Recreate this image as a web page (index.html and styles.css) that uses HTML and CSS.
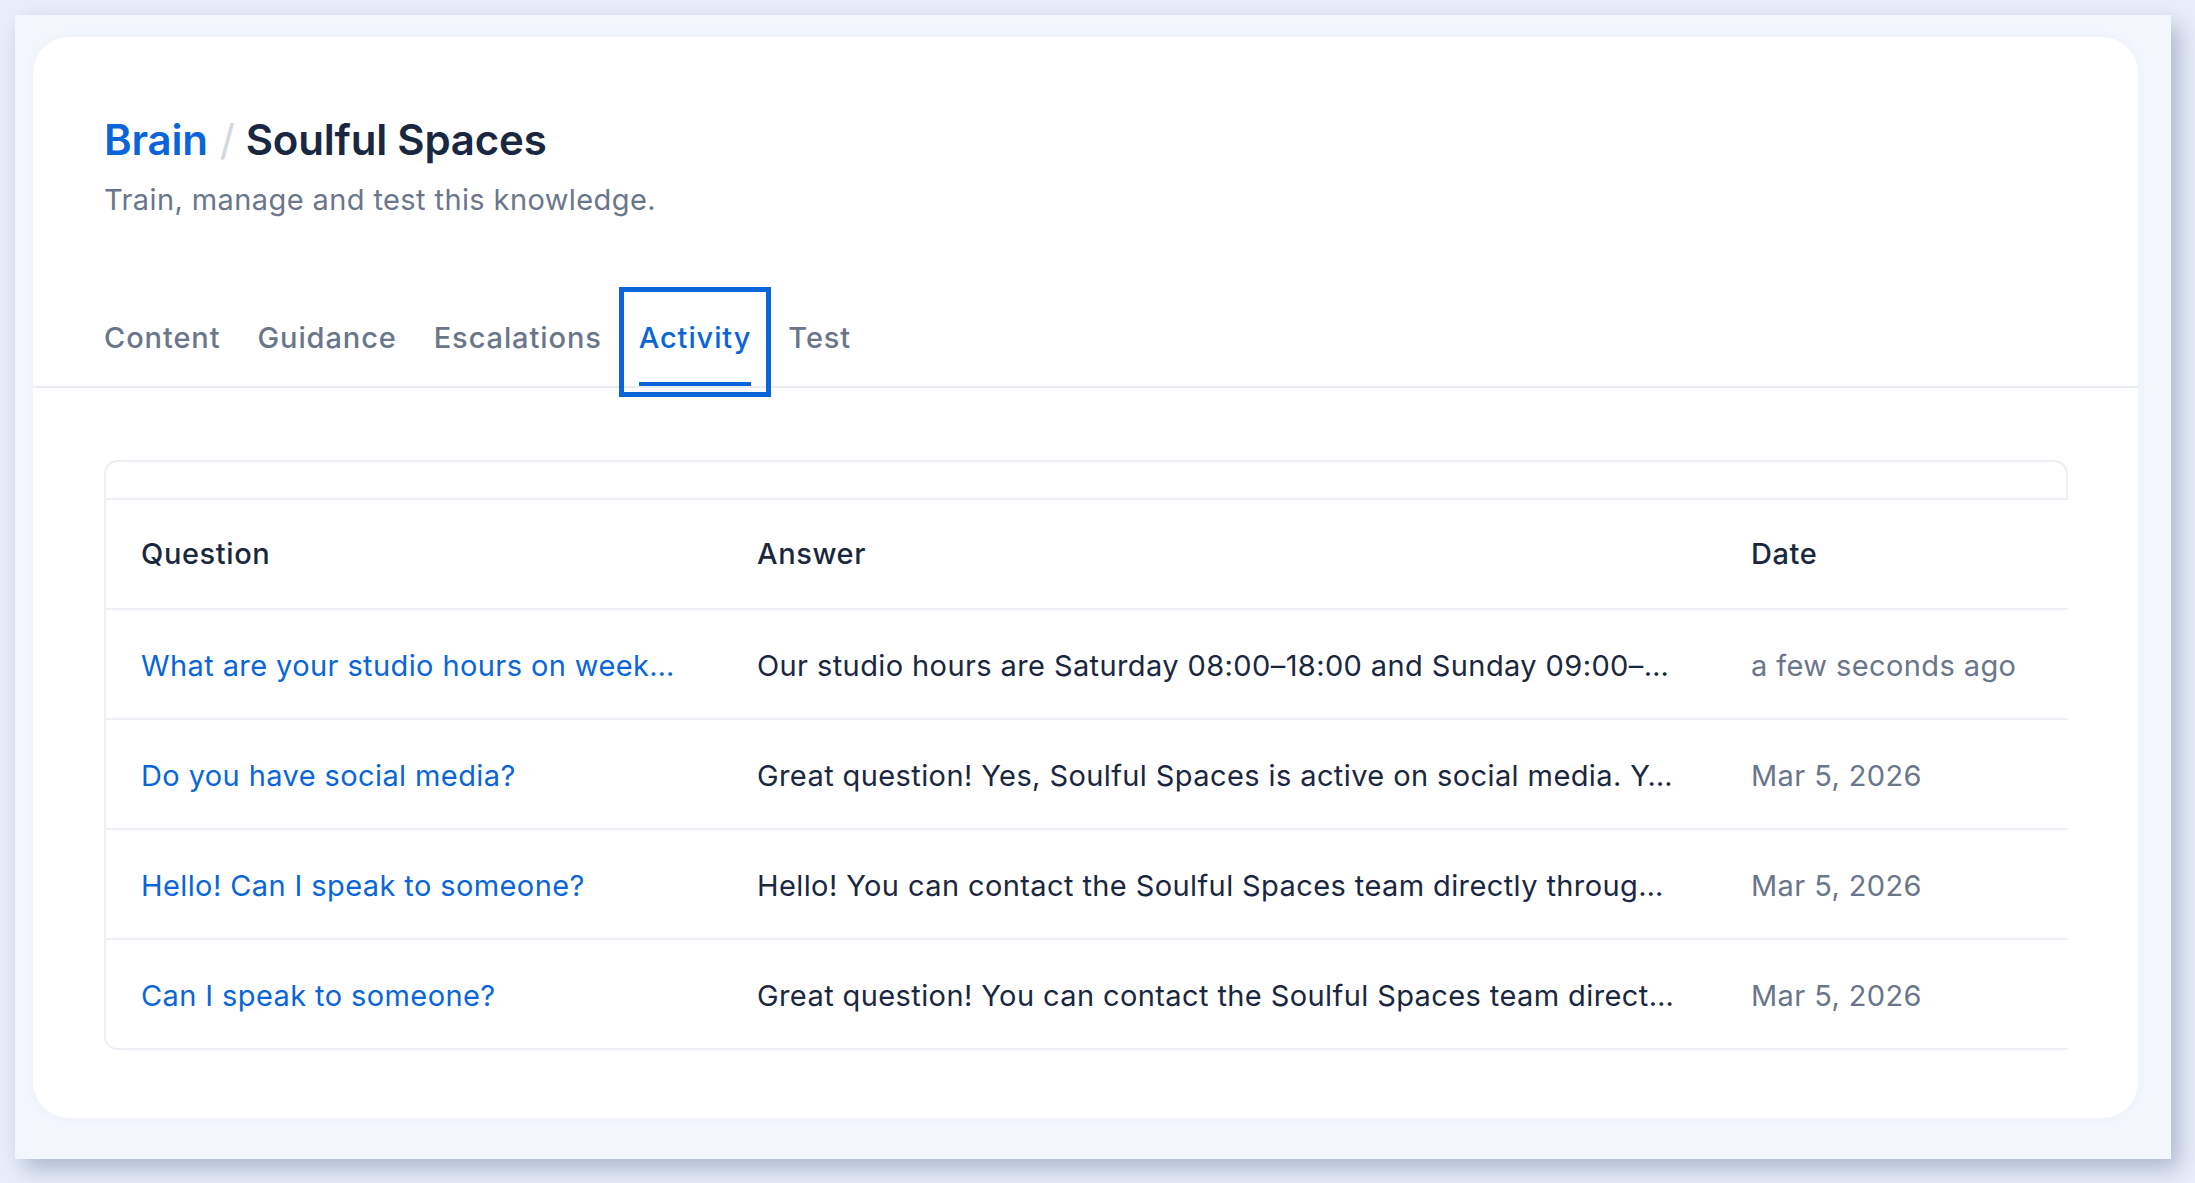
FILE: index.html
```html
<!DOCTYPE html>
<html lang="en">
<head>
<meta charset="utf-8">
<title>Brain / Soulful Spaces</title>
<link rel="stylesheet" href="styles.css">
</head>
<body>
<div class="frame">
  <main class="card">
    <header class="page-head">
      <h1 class="title"><span class="crumb">Brain</span><span class="sep">/</span><span class="current">Soulful Spaces</span></h1>
      <p class="subtitle">Train, manage and test this knowledge.</p>
    </header>
    <nav class="tabs">
      <button class="tab"><span class="tab-label">Content</span></button>
      <button class="tab"><span class="tab-label">Guidance</span></button>
      <button class="tab"><span class="tab-label">Escalations</span></button>
      <button class="tab active"><span class="tab-label">Activity</span></button>
      <button class="tab"><span class="tab-label">Test</span></button>
    </nav>
    <section class="content">
      <div class="table">
        <div class="table-band"></div>
        <div class="row head">
          <div class="cell">Question</div>
          <div class="cell">Answer</div>
          <div class="cell">Date</div>
        </div>
        <div class="row body-row">
          <div class="cell q">What are your studio hours on week…</div>
          <div class="cell a">Our studio hours are Saturday 08:00–18:00 and Sunday 09:00–…</div>
          <div class="cell d">a few seconds ago</div>
        </div>
        <div class="row body-row">
          <div class="cell q">Do you have social media?</div>
          <div class="cell a">Great question! Yes, Soulful Spaces is active on social media. Y…</div>
          <div class="cell d">Mar 5, 2026</div>
        </div>
        <div class="row body-row">
          <div class="cell q">Hello! Can I speak to someone?</div>
          <div class="cell a">Hello! You can contact the Soulful Spaces team directly throug…</div>
          <div class="cell d">Mar 5, 2026</div>
        </div>
        <div class="row body-row">
          <div class="cell q">Can I speak to someone?</div>
          <div class="cell a">Great question! You can contact the Soulful Spaces team direct…</div>
          <div class="cell d">Mar 5, 2026</div>
        </div>
      </div>
    </section>
  </main>
</div>
</body>
</html>
```
FILE: styles.css
```css
* { box-sizing: border-box; }

html, body {
  margin: 0;
  padding: 0;
}

body {
  background: #e9effa;
  font-family: Inter, "Noto Sans", "Liberation Sans", sans-serif;
  color: #1a2740;
  height: 1183px;
  overflow: hidden;
}

.frame {
  margin: 15px 24px 24px 15px;
  background: #f3f6fc;
  padding: 22px 33px 41px 18px;
  box-shadow: 8px 10px 22px rgba(70, 92, 135, 0.38);
}

.card {
  background: #ffffff;
  border-radius: 36px;
  box-shadow: 0 0 10px rgba(120, 140, 180, 0.06);
  padding: 77px 0 68px 0;
}

.page-head {
  padding: 0 70px 0 71px;
}

.title {
  margin: 0;
  font-size: 42px;
  line-height: 52px;
  font-weight: 600;
  letter-spacing: -0.2px;
  display: flex;
  align-items: baseline;
}

.crumb { color: #0a66d8; }

.sep {
  color: #d3d8df;
  font-weight: 400;
  margin: 0 11px 0 12px;
}

.current { color: #1a2740; }

.subtitle {
  margin: 16px 0 0 0;
  font-size: 29px;
  line-height: 36px;
  letter-spacing: 0.4px;
  color: #6a768a;
  font-weight: 400;
}

.tabs {
  margin-top: 80px;
  padding-left: 62px;
  display: flex;
  align-items: flex-end;
  gap: 19px;
  border-bottom: 2px solid #e9ecf1;
}

.tab {
  font: inherit;
  background: none;
  border: 0;
  padding: 22px 9px 0 9px;
  margin: 0;
  cursor: pointer;
  font-size: 29px;
  line-height: 36px;
  letter-spacing: 0.9px;
  font-weight: 500;
  color: #6a768a;
  display: flex;
}

.tab-label {
  display: block;
  padding-bottom: 26px;
  border-bottom: 4px solid transparent;
}

.tab.active {
  color: #0a66d8;
  outline: 5px solid #0a66d8;
  outline-offset: 6px;
}

.tab.active .tab-label {
  border-bottom-color: #0a66d8;
}

.content {
  padding: 72px 70px 0 71px;
}

.table {
  border: 2px solid #eceff3;
  border-radius: 14px 14px 0 14px;
}

.table-band {
  height: 36px;
}

.row {
  display: grid;
  grid-template-columns: 616px 994px 1fr;
  align-items: center;
  height: 110px;
  border-top: 2px solid #eceff3;
  margin-right: -2px;
  background: #ffffff;
  font-size: 29px;
  line-height: 36px;
  letter-spacing: 0.4px;
}

.row:last-child {
  border-bottom-left-radius: 12px;
}

.body-row .cell {
  padding-top: 3px;
}

.cell {
  padding-left: 35px;
  white-space: nowrap;
  overflow: hidden;
}

.head .cell {
  font-weight: 500;
  letter-spacing: 0.6px;
  color: #1a2740;
}

.q { color: #0a66d8; }
.a { color: #1a2740; }
.d { color: #6a768a; }
```
